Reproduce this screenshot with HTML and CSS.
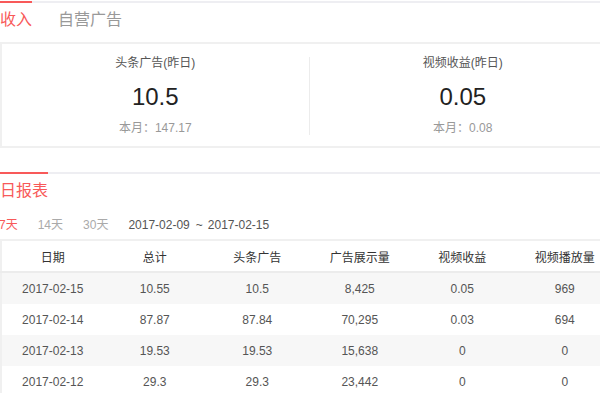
FILE: index.html
```html
<!DOCTYPE HTML>
<html>

<head>
	<meta charset="utf-8">

	<link rel="stylesheet" href="styles.css">
</head>

<body>

	<div class="page">
		<div class="tabs">
			<div class="tab active">收入</div>
			<div class="tab">自营广告</div>
		</div>

		<div class="card">
			<div class="half">
				<div class="label">头条广告(昨日)</div>
				<div class="value">10.5</div>
				<div class="month">本月：147.17</div>
			</div>
			<div class="half divided">
				<div class="label">视频收益(昨日)</div>
				<div class="value">0.05</div>
				<div class="month">本月：0.08</div>
			</div>
		</div>

		<div class="tabs report">
			<div class="tab active">日报表</div>
		</div>

		<div class="filter">
			<span class="range on">7天</span>
			<span class="range">14天</span>
			<span class="range">30天</span>
			<span class="dates">2017-02-09<span class="tilde">~</span>2017-02-15</span>
		</div>

		<table class="daily">
			<tr>
				<th>日期</th>
				<th>总计</th>
				<th>头条广告</th>
				<th>广告展示量</th>
				<th>视频收益</th>
				<th>视频播放量</th>
			</tr>
			<tr class="odd">
				<td>2017-02-15</td>
				<td>10.55</td>
				<td>10.5</td>
				<td>8,425</td>
				<td>0.05</td>
				<td>969</td>
			</tr>
			<tr>
				<td>2017-02-14</td>
				<td>87.87</td>
				<td>87.84</td>
				<td>70,295</td>
				<td>0.03</td>
				<td>694</td>
			</tr>
			<tr class="odd">
				<td>2017-02-13</td>
				<td>19.53</td>
				<td>19.53</td>
				<td>15,638</td>
				<td>0</td>
				<td>0</td>
			</tr>
			<tr>
				<td>2017-02-12</td>
				<td>29.3</td>
				<td>29.3</td>
				<td>23,442</td>
				<td>0</td>
				<td>0</td>
			</tr>
		</table>
	</div>

</body>

</html>
```

FILE: styles.css
```css
html,
body {
	margin: 0;
	padding: 0;
	background: #fff;
	overflow: hidden;
}

body {
	font-family: "Liberation Sans", "Noto Sans CJK SC", sans-serif;
	color: #333;
}

.page {
	width: 616px;
}

.tabs {
	display: flex;
	gap: 26px;
	border-top: 2px solid #eeeef2;
	margin-top: 1px;
}

.tab {
	font-size: 16px;
	line-height: 24px;
	padding-top: 5px;
	color: #999;
}

.tab.active {
	color: #f85959;
	margin-top: -2px;
	border-top: 2px solid #f85959;
}

.card {
	display: flex;
	margin-top: 10px;
	border: 2px solid #f0f0f0;
	border-right: none;
}

.half {
	flex: 1;
	text-align: center;
	margin: 13px 0 11px;
}

.half.divided {
	border-left: 1px solid #ececec;
}

.label {
	font-size: 12px;
	line-height: 12px;
	color: #555;
}

.value {
	font-size: 24px;
	line-height: 30px;
	margin-top: 13px;
	color: #222;
}

.month {
	font-size: 12px;
	line-height: 14px;
	margin-top: 9px;
	color: #999;
}

.report {
	margin-top: 24px;
}

.report .tab {
	padding-top: 5px;
}

.filter {
	margin-top: 14px;
	margin-left: -1px;
	font-size: 12px;
	line-height: 16px;
	display: flex;
	color: #aaa;
}

.range {
	margin-right: 20px;
}

.range.on {
	color: #f85959;
}

.dates {
	color: #555;
	font-size: 12px;
}

.tilde {
	margin: 0 5px 0 6px;
}

.daily {
	margin-top: 6px;
	width: 616px;
	border-collapse: collapse;
	table-layout: fixed;
	border-top: 2px solid #f0f0f0;
	border-left: 2px solid #f0f0f0;
	font-size: 12px;
}

.daily th {
	height: 30px;
	font-weight: normal;
	color: #333;
	border-bottom: 2px solid #ececec;
	padding: 0;
}

.daily td {
	height: 31px;
	padding: 0;
	text-align: center;
	color: #555;
}

.daily .odd td {
	background: #f7f7f7;
}
```
